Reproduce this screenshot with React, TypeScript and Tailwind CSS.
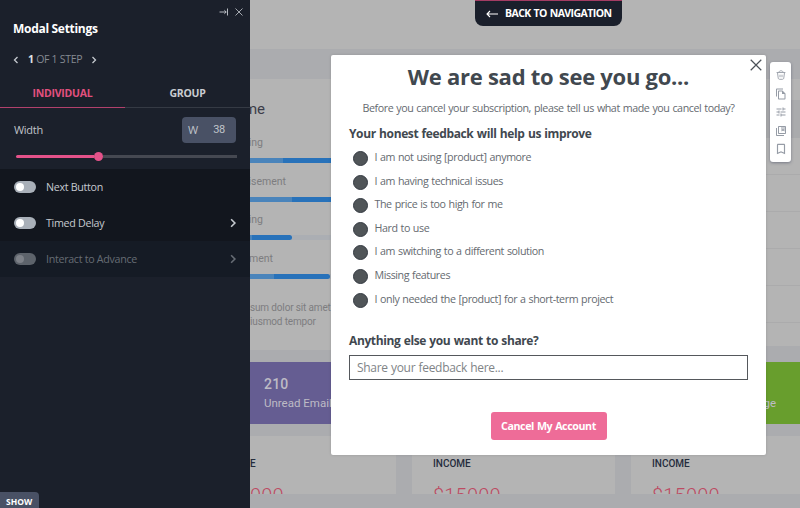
import React from "react";
import {
  MdOutlineFileCopy,
  MdTune,
  MdOutlineCollectionsBookmark,
  MdBookmarkBorder,
} from "react-icons/md";

const reasons = [
  "I am not using [product] anymore",
  "I am having technical issues",
  "The price is too high for me",
  "Hard to use",
  "I am switching to a different solution",
  "Missing features",
  "I only needed the [product] for a short-term project",
];

function Chevron({ left = false, className = "" }: { left?: boolean; className?: string }) {
  return (
    <svg viewBox="0 0 6 8" className={className} fill="none" stroke="currentColor" strokeWidth="1.3">
      <path d={left ? "M4.5 1 1.5 4l3 3" : "M1.5 1l3 3-3 3"} />
    </svg>
  );
}

function Cross({ className = "" }: { className?: string }) {
  return (
    <svg viewBox="0 0 10 10" className={className} fill="none" stroke="currentColor">
      <path d="M.6.6l8.8 8.8M9.4.6.6 9.4" />
    </svg>
  );
}

function SettingRow({ label, arrow, muted }: { label: string; arrow?: boolean; muted?: boolean }) {
  return (
    <div
      className={
        "flex h-9 items-center pl-3.5 pr-[13px] text-[10.7px] tracking-[-0.3px] " +
        (muted ? "bg-[#151b25] text-[#666c74]" : "bg-[#12161e] text-[#c5c9cf]")
      }
    >
      <span className={"flex h-3 w-[22px] items-center rounded-full pl-[2px] " + (muted ? "bg-[#5d636b]" : "bg-[#a9b0b9]")}>
        <span className={"size-[8px] rounded-full " + (muted ? "bg-[#7d8188]" : "bg-white")} />
      </span>
      <span className="ml-2.5 flex-1">{label}</span>
      {arrow && <Chevron className="h-[10px] w-[8px]" />}
    </div>
  );
}

function Sidebar() {
  return (
    <aside className="z-10 flex w-[250px] shrink-0 flex-col bg-[#1b202b] font-['Open_Sans',sans-serif]">
      <div className="flex h-[21px] items-start justify-end gap-[6px] pr-[7px] pt-[7px] text-[#c8ccd2]">
        <svg viewBox="0 0 10 8" className="mt-[1px] h-2 w-[10px]" fill="none" stroke="currentColor" strokeWidth=".9">
          <path d="M.5 4h6.7M5.4 2.3 7.2 4 5.4 5.7M8.5 .5v7" />
        </svg>
        <Cross className="mt-[1px] size-2" />
      </div>
      <h2 className="h-[30px] pl-[13px] text-[12px] font-bold leading-[15px] tracking-[-0.3px] text-white">Modal Settings</h2>
      <div className="flex h-[18px] items-center pl-[13px] text-[10.5px] text-[#858a92]">
        <Chevron left className="h-2 w-1.5 text-[#c5c9cf]" />
        <span className="ml-[9px] tracking-[-0.3px]">
          <b className="text-[#dfe1e4]">1</b> OF 1 STEP
        </span>
        <Chevron className="ml-[9px] h-2 w-1.5 text-[#c5c9cf]" />
      </div>
      <div className="mt-[9px] flex h-[30px] text-center text-[10.5px] font-bold leading-[30px] tracking-[-0.25px]">
        <div className="w-[125px] border-b border-[#b2416c] text-[#e2507f]">INDIVIDUAL</div>
        <div className="w-[125px] border-b border-[#353a44] text-[#c9ccd1]">GROUP</div>
      </div>
      <div className="mt-[9px] flex h-[26px] items-center justify-between pl-3.5 pr-3.5 text-[11px] text-[#c0c4ca]">
        <span className="tracking-[-0.3px]">Width</span>
        <span className="flex h-[26px] w-[54px] items-center justify-between rounded bg-[#495165] pl-1.5 pr-[11px]">
          <span>W</span>
          <span className="font-[Roboto,sans-serif] tracking-[-0.3px]">38</span>
        </span>
      </div>
      <div className="mt-[9px] flex h-[9px] items-center pl-4 pr-[13px]">
        <div className="h-[3px] w-[78px] rounded-l-full bg-[#e4528a]" />
        <div className="size-[9px] rounded-full bg-[#e4528a]" />
        <div className="h-[3px] flex-1 bg-[#454851]" />
      </div>
      <div className="mt-2">
        <SettingRow label="Next Button" />
        <SettingRow label="Timed Delay" arrow />
        <SettingRow label="Interact to Advance" arrow muted />
      </div>
      <div className="mt-auto flex h-4 w-[39px] items-center rounded-tr bg-[#495165] pl-1.5 pt-1 text-[8.5px] font-bold text-white">
        SHOW
      </div>
    </aside>
  );
}

function Progress({ label, labelClass, light, fill }: { label: string; labelClass: string; light: string; fill: string }) {
  return (
    <div className="h-[38.6px]">
      <div className={"flex h-[22px] justify-end whitespace-nowrap text-[10.5px] leading-[14px] text-[#7d7d80] " + labelClass}>{label}</div>
      <div className="flex h-[5px] w-[90px] bg-[#abaeb3]">
        <div className={"h-full bg-[#4a84bb] " + light} />
        <div className={"h-full rounded-r-full bg-[#2872ba] " + fill} />
      </div>
    </div>
  );
}

function IncomeCard({ className = "", partial }: { className?: string; partial?: boolean }) {
  return (
    <div className={"h-[58px] shrink-0 overflow-hidden bg-[#b4b4b4] pt-[21px] font-[Roboto,sans-serif] " + className}>
      <div className="h-[27px] text-[10px] font-medium leading-[14px] text-[#262d3d]">{partial ? "E" : "INCOME"}</div>
      <div className="text-[20px] font-light leading-[24px] tracking-[0.2px] text-[#bd4a62]">{partial ? "000" : "$15000"}</div>
    </div>
  );
}

function Dashboard() {
  return (
    <main className="flex min-w-0 flex-1 flex-col bg-[#abacaf] font-[Roboto,sans-serif]">
      <div className="h-[49px] shrink-0 bg-[#b4b4b4]" />
      <div className="mt-[30px] flex h-[283px] shrink-0 justify-between">
        <section className="h-[271px] w-[300px] bg-[#b4b4b4] pt-[20px]">
          <div className="flex h-[34px] w-[15px] justify-end text-[15px] leading-[20px] text-[#3c3d49]">me</div>
          <div className="mt-[3px]">
            <Progress label="ing" labelClass="w-[13px]" light="w-[33px]" fill="w-[57px]" />
            <Progress label="isement" labelClass="w-[36px]" light="w-[42px]" fill="w-[48px]" />
            <Progress label="ing" labelClass="w-[13px]" light="w-[2px]" fill="w-[40px]" />
            <Progress label="ment" labelClass="w-[23px]" light="w-[24px]" fill="w-[56px]" />
          </div>
          <p className="mt-[11px] whitespace-pre text-[10px] leading-[14px] tracking-[-0.15px] text-[#7d7d80]">
            {"sum dolor sit amet\niusmod tempor"}
          </p>
        </section>
        <section className="h-[267px] w-[100px] bg-[#b4b4b4] pt-[21px]">
          <div className="h-[38px] bg-[#aaabad]" />
          {[0, 1, 2, 3, 4].map((n) => (
            <div key={n} className="h-[37px] border-b border-[#ababac]" />
          ))}
        </section>
      </div>
      <div className="flex h-[62px] shrink-0 justify-between text-[#bdbbc5]">
        <div className="w-[146px] bg-[#655d92] pl-3.5 pt-[14px]">
          <div className="text-[14px] font-medium leading-[17px] tracking-[0.2px]">210</div>
          <div className="mt-[2px] text-[11.5px] leading-[16px]">Unread Email</div>
        </div>
        <div className="flex w-[150px] justify-end bg-[#689e2d] pr-[24px] pt-[33px] text-[11.5px] leading-[16px]">ge</div>
      </div>
      <div className="mt-[12px] flex gap-4">
        <IncomeCard partial className="w-[146px]" />
        <IncomeCard className="w-[203px] pl-[21px]" />
        <IncomeCard className="w-[169px] pl-[21px]" />
      </div>
    </main>
  );
}

function Modal() {
  return (
    <div className="absolute left-[331px] top-[55px] z-20 h-[400px] w-[435px] rounded-[2px] bg-white px-[18px] font-['Open_Sans',sans-serif] text-[#41484f] shadow-[0_0_3px_rgba(0,0,0,0.15)]">
      <Cross className="absolute right-[4px] top-[4px] size-[12px] text-[#4b5158]" />
      <h1 className="pt-[6px] text-center text-[22px] font-bold leading-[30px] tracking-[-0.27px]">We are sad to see you go...</h1>
      <p className="mt-[9px] whitespace-nowrap text-center text-[10.7px] leading-[16px] tracking-[-0.42px] text-[#656a70] [word-spacing:0.6px]">
        Before you cancel your subscription, please tell us what made you cancel today?
      </p>
      <h2 className="mt-[10px] text-[12px] font-bold leading-[16px] tracking-[-0.38px] [word-spacing:0.6px]">Your honest feedback will help us improve</h2>
      <ul className="mt-[3px]">
        {reasons.map((reason) => (
          <li key={reason} className="flex h-[23.6px] items-start gap-[6.5px] pl-1 text-[10.7px] leading-[25px] tracking-[-0.42px] text-[#656a70] [word-spacing:0.6px]">
            <span className="mt-[6px] size-[15px] rounded-full border border-[#343a42] bg-[#505558]" />
            <span className="h-[25px]">{reason}</span>
          </li>
        ))}
      </ul>
      <h2 className="mt-[23px] text-[12px] font-bold leading-[16px] tracking-[-0.38px] [word-spacing:0.6px]">Anything else you want to share?</h2>
      <div className="mt-[6px] flex h-[25px] items-center border border-[#55585c] pl-[7px] text-[12px] tracking-[-0.3px] text-[#808487] [word-spacing:0.4px]">
        Share your feedback here...
      </div>
      <button className="mx-auto mt-[32px] block h-7 w-[116px] rounded-[3px] bg-[#ee6c98] text-[10.7px] font-bold tracking-[-0.42px] text-white [word-spacing:0.6px]">
        Cancel My Account
      </button>
    </div>
  );
}

function Toolbar() {
  return (
    <div className="absolute left-[770px] top-[62px] z-20 flex h-[100px] w-[21px] flex-col items-center gap-[6.5px] rounded-[3px] bg-white pt-[7px] text-[#969ca6] shadow-[0_1px_3px_rgba(60,65,90,0.5)]">
      <svg viewBox="-1 -1 12 12" className="size-[12px] shrink-0" fill="none" stroke="currentColor" strokeWidth=".9">
        <path d="M.6 2.5h8.8M3 2.3C3.2 1 4 .8 5 .8s1.8.2 2 1.5M1.5 2.7l.7 5.2c.1 1 .6 1.4 1.4 1.4h2.8c.8 0 1.3-.4 1.4-1.4l.7-5.2M4 4.7v2.5M6 4.7v2.5" />
      </svg>
      <MdOutlineFileCopy className="size-[12px] shrink-0" />
      <MdTune className="size-[12px] shrink-0" />
      <MdOutlineCollectionsBookmark className="size-[12px] shrink-0" />
      <MdBookmarkBorder className="-mt-[1px] size-[14px] shrink-0" />
    </div>
  );
}

export default function App() {
  return (
    <div className="relative flex h-[508px] w-[800px] overflow-hidden">
      <Sidebar />
      <Dashboard />
      <div className="absolute left-[475px] top-0 z-20 flex h-[26px] w-[147px] items-center rounded-b-lg border-t border-[#a33c63] bg-[#1a1f2b] pl-[11px] font-['Open_Sans',sans-serif] text-[10.5px] font-bold tracking-[-0.55px] text-white [word-spacing:0.6px]">
        <svg viewBox="0 0 12 8" className="mr-[7px] h-2 w-3 shrink-0" fill="none" stroke="currentColor" strokeWidth="1.1">
          <path d="M12 4H1M4 1 1 4l3 3" />
        </svg>
        <span className="whitespace-nowrap">BACK TO NAVIGATION</span>
      </div>
      <Modal />
      <Toolbar />
    </div>
  );
}
